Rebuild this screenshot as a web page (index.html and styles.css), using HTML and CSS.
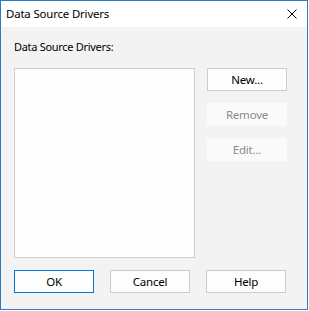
FILE: index.html
```html
<!DOCTYPE html>
<html>
<head>
<meta charset="utf-8">
<link rel="stylesheet" href="styles.css">
</head>
<body>
<div class="window">
  <div class="titlebar">
    <span class="title">Data Source Drivers</span>
    <span class="close">
      <svg width="10" height="10" viewBox="0 0 10 10"><path d="M0.5 0.5 L9.5 9.5 M9.5 0.5 L0.5 9.5" stroke="#000" stroke-width="1" fill="none"/></svg>
    </span>
  </div>
  <div class="content">
    <div class="label">Data Source Drivers:</div>
    <div class="main">
      <div class="listbox"></div>
      <div class="side">
        <button class="btn">New...</button>
        <button class="btn disabled">Remove</button>
        <button class="btn disabled">Edit...</button>
      </div>
    </div>
    <div class="footer">
      <button class="btn default">OK</button>
      <button class="btn">Cancel</button>
      <button class="btn">Help</button>
    </div>
  </div>
</div>
</body>
</html>
```

FILE: styles.css
```css
html, body {
  margin: 0;
  padding: 0;
  background: #ffffff;
}
body {
  font-family: "Noto Sans", "Open Sans", sans-serif;
  font-size: 11px;
  letter-spacing: -0.3px;
  color: #000;
}
.window {
  width: 306px;
  height: 308px;
  border: 1px solid #2f7cc4;
  display: flex;
  flex-direction: column;
  background: #f3f3f3;
}
.titlebar {
  height: 26px;
  background: #ffffff;
  display: flex;
  align-items: center;
  justify-content: space-between;
  padding: 0 10px 0 5px;
}
.title {
  font-size: 11.4px;
  letter-spacing: -0.15px;
  line-height: 16px;
}
.close {
  display: flex;
  width: 10px;
  height: 10px;
}
.content {
  flex: 1;
  padding: 12px 0 0 13px;
  display: flex;
  flex-direction: column;
}
.label {
  line-height: 16px;
  height: 16px;
}
.main {
  margin-top: 13px;
  display: flex;
  gap: 12px;
}
.listbox {
  width: 179px;
  height: 188px;
  border: 1px solid #cfcfcf;
  background: #fcfdfc;
}
.side {
  display: flex;
  flex-direction: column;
  gap: 12px;
}
.btn {
  width: 80px;
  height: 23px;
  box-sizing: border-box;
  border: 1px solid #cdcdcd;
  background: #fdfdfd;
  font-family: inherit;
  font-size: 11.5px;
  letter-spacing: -0.2px;
  color: #000;
  padding: 0;
  margin: 0;
}
.btn.disabled {
  border-color: #fafafa;
  background: #fafafa;
  color: #8a8a8a;
}
.btn.default {
  border-color: #0078d7;
}
.footer {
  margin-top: 12px;
  display: flex;
  gap: 16px;
}
```
